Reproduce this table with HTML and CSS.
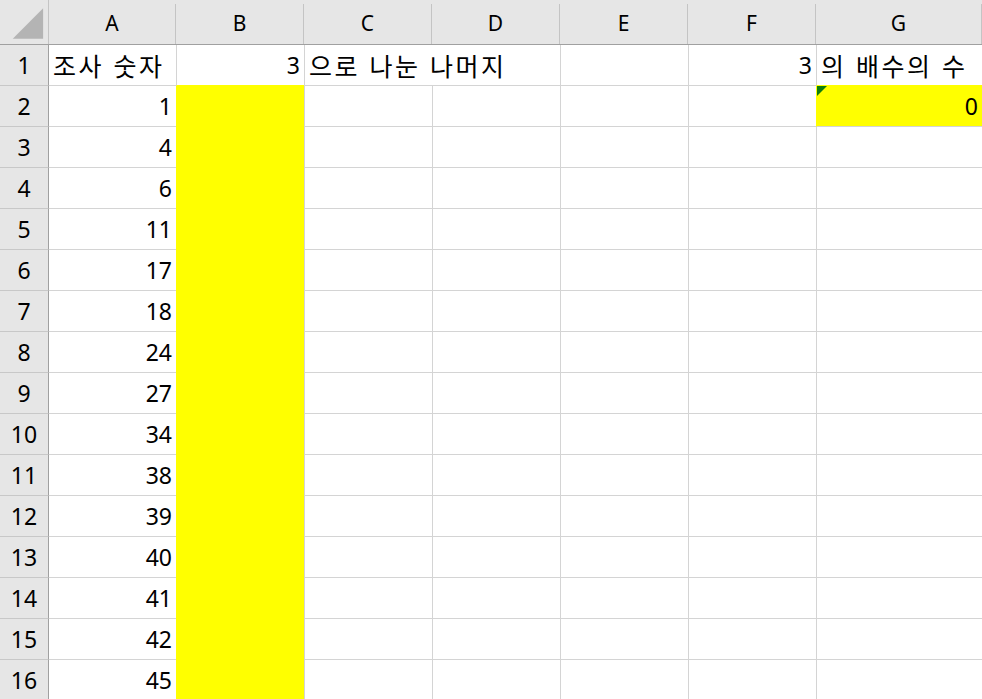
FILE: index.html
```html
<!DOCTYPE html>
<html lang="ko">
<head>
<meta charset="utf-8">
<title>Sheet</title>
<link rel="stylesheet" href="styles.css">
</head>
<body>
<div class="sheet">
  <div class="hdr">
    <div class="corner"><svg width="49" height="41" viewBox="0 0 49 41"><polygon points="13,36 44,5 44,36" fill="#b4b4b4"/></svg></div>
    <div class="ch">A</div><div class="ch">B</div><div class="ch">C</div><div class="ch">D</div><div class="ch">E</div><div class="ch">F</div><div class="ch">G</div>
  </div>
  <div class="row">
    <div class="rh">1</div>
    <div class="c first txt">조사 숫자</div>
    <div class="c num yb">3</div>
    <div class="c txt span2">으로 나눈 나머지</div>
    <div class="c"></div>
    <div class="c num">3</div>
    <div class="c txt yb">의 배수의 수</div>
  </div>
  <div class="row"><div class="rh">2</div><div class="c first num">1</div><div class="c y"></div><div class="c"></div><div class="c"></div><div class="c"></div><div class="c"></div><div class="c y num g2"><span class="flag"></span>0</div></div>
  <div class="row"><div class="rh">3</div><div class="c first num">4</div><div class="c y"></div><div class="c"></div><div class="c"></div><div class="c"></div><div class="c"></div><div class="c"></div></div>
  <div class="row"><div class="rh">4</div><div class="c first num">6</div><div class="c y"></div><div class="c"></div><div class="c"></div><div class="c"></div><div class="c"></div><div class="c"></div></div>
  <div class="row"><div class="rh">5</div><div class="c first num">11</div><div class="c y"></div><div class="c"></div><div class="c"></div><div class="c"></div><div class="c"></div><div class="c"></div></div>
  <div class="row"><div class="rh">6</div><div class="c first num">17</div><div class="c y"></div><div class="c"></div><div class="c"></div><div class="c"></div><div class="c"></div><div class="c"></div></div>
  <div class="row"><div class="rh">7</div><div class="c first num">18</div><div class="c y"></div><div class="c"></div><div class="c"></div><div class="c"></div><div class="c"></div><div class="c"></div></div>
  <div class="row"><div class="rh">8</div><div class="c first num">24</div><div class="c y"></div><div class="c"></div><div class="c"></div><div class="c"></div><div class="c"></div><div class="c"></div></div>
  <div class="row"><div class="rh">9</div><div class="c first num">27</div><div class="c y"></div><div class="c"></div><div class="c"></div><div class="c"></div><div class="c"></div><div class="c"></div></div>
  <div class="row"><div class="rh">10</div><div class="c first num">34</div><div class="c y"></div><div class="c"></div><div class="c"></div><div class="c"></div><div class="c"></div><div class="c"></div></div>
  <div class="row"><div class="rh">11</div><div class="c first num">38</div><div class="c y"></div><div class="c"></div><div class="c"></div><div class="c"></div><div class="c"></div><div class="c"></div></div>
  <div class="row"><div class="rh">12</div><div class="c first num">39</div><div class="c y"></div><div class="c"></div><div class="c"></div><div class="c"></div><div class="c"></div><div class="c"></div></div>
  <div class="row"><div class="rh">13</div><div class="c first num">40</div><div class="c y"></div><div class="c"></div><div class="c"></div><div class="c"></div><div class="c"></div><div class="c"></div></div>
  <div class="row"><div class="rh">14</div><div class="c first num">41</div><div class="c y"></div><div class="c"></div><div class="c"></div><div class="c"></div><div class="c"></div><div class="c"></div></div>
  <div class="row"><div class="rh">15</div><div class="c first num">42</div><div class="c y"></div><div class="c"></div><div class="c"></div><div class="c"></div><div class="c"></div><div class="c"></div></div>
  <div class="row"><div class="rh">16</div><div class="c first num">45</div><div class="c y"></div><div class="c"></div><div class="c"></div><div class="c"></div><div class="c"></div><div class="c"></div></div>
</div>
</body>
</html>
```
FILE: styles.css
```css
html, body {
  margin: 0;
  padding: 0;
  background: #ffffff;
}
body {
  width: 982px;
  height: 699px;
  overflow: hidden;
  font-family: "Noto Sans", "Noto Sans CJK KR", sans-serif;
  color: #000;
}
.sheet {
  width: 982px;
}
.hdr, .row {
  display: grid;
  grid-template-columns: 49px 127px repeat(5, 128px) 1fr;
}
.hdr {
  height: 45px;
  box-sizing: border-box;
  padding-top: 4px;
  background: #e6e6e6;
  border-bottom: 1px solid #a0a0a0;
}
.corner {
  border-right: 1px solid #c4c4c4;
  box-sizing: border-box;
  margin-top: -4px;
  height: 44px;
  display: flex;
  align-items: flex-end;
}
.corner svg { display: block; }
.ch {
  box-sizing: border-box;
  height: 40px;
  line-height: 38px;
  text-align: center;
  font-size: 21px;
  border-right: 1px solid #c4c4c4;
}
.row {
  height: 41px;
}
.rh {
  box-sizing: border-box;
  background: #e6e6e6;
  border-right: 1px solid #a0a0a0;
  border-bottom: 1px solid #c8c8c8;
  text-align: center;
  font-size: 23px;
  line-height: 40px;
}
.c {
  box-sizing: border-box;
  border-bottom: 1px solid #d4d4d4;
  border-left: 1px solid #d4d4d4;
  font-size: 23px;
  line-height: 40px;
  white-space: nowrap;
  position: relative;
}
.c.first { border-left: none; }
.span2 { grid-column: span 2; }
.txt {
  padding-left: 4px;
  font-family: "Noto Sans CJK KR", "Noto Sans", sans-serif;
  font-size: 25px;
  letter-spacing: 2.5px;
}
.num {
  text-align: right;
  padding-right: 4px;
}
.y {
  background: #ffff00;
  border-left-color: #ffff00;
  border-bottom-color: #ffff00;
}
.yb { border-bottom-color: #ffff00; }
.g2 {
  background: #ffff00;
  border-left-color: #ffff00;
  border-bottom-color: #d4d4d4;
}
.flag {
  position: absolute;
  left: 0;
  top: 0;
  width: 0;
  height: 0;
  border-top: 10px solid #0d7d0d;
  border-right: 10px solid transparent;
}
```
